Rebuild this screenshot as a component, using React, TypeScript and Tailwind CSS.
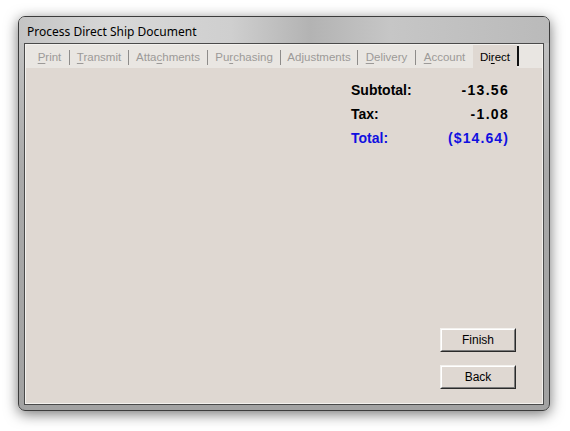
import React from "react";

const tabs: { pre: string; u: string; post: string; w: string; sep: boolean }[] = [
  { pre: "", u: "P", post: "rint", w: "w-[39px]", sep: true },
  { pre: "", u: "T", post: "ransmit", w: "w-[58px]", sep: true },
  { pre: "Atta", u: "c", post: "hments", w: "w-[78px]", sep: true },
  { pre: "Pu", u: "r", post: "chasing", w: "w-[72px]", sep: true },
  { pre: "Ad", u: "j", post: "ustments", w: "w-[76px]", sep: true },
  { pre: "", u: "D", post: "elivery", w: "w-[57px]", sep: true },
  { pre: "", u: "A", post: "ccount", w: "w-[57px]", sep: false },
];

function Btn({ label }: { label: string }) {
  return (
    <div className="w-[76px] h-[24px] border border-t-[#f4f2ef] border-l-[#f4f2ef] border-r-[#2a2a2a] border-b-[#2a2a2a]">
      <div className="w-full h-full border border-t-[#ffffff] border-l-[#ffffff] border-r-[#7a7a7a] border-b-[#7a7a7a] flex items-center justify-center text-[12px] text-black">
        {label}
      </div>
    </div>
  );
}

export default function App() {
  return (
    <div className="w-[570px] h-[431px] bg-white overflow-hidden" style={{ fontFamily: '"Liberation Sans", Arial, sans-serif' }}>
      <div className="ml-[18px] mt-[16px] w-[532px] h-[395px] rounded-[7px] border border-[#3c3c3c] bg-[linear-gradient(180deg,#c9c9c9_0%,#bdbdbd_12%,#a9a9a9_40%,#a2a2a2_100%)] shadow-[0_3px_14px_rgba(0,0,0,0.55)] flex flex-col">
        <div className="h-[26px] shrink-0 rounded-t-[6px] bg-[linear-gradient(90deg,#c4c4c4_0%,#d8d8d8_18%,#cfcfcf_40%,#b3b3b3_55%,#c6c6c6_70%,#bababa_100%)] flex items-center pl-[8px] pt-[4px]">
          <span className="text-[12px] text-black" style={{ fontFamily: '"Noto Sans", "Open Sans", sans-serif' }}>
            Process Direct Ship Document
          </span>
        </div>
        <div className="flex-1 mx-[5px] mb-[5px] border border-[#4a4a4a] bg-[#f3f1ee] p-[1px] flex flex-col">
          <div className="flex-1 bg-[#dfd8d2] flex flex-col">
            <div className="h-[23px] flex items-stretch bg-[#e9e6e2] pl-[4px]">
              {tabs.map((t) => (
                <div key={t.u + t.post} className="flex items-center pt-[2px]">
                  <div className={`${t.w} text-center text-[11.5px] text-[#9c9a98]`}>
                    {t.pre}
                    <span className="underline underline-offset-[2px]">{t.u}</span>
                    {t.post}
                  </div>
                  {t.sep && <div className="w-px h-[15px] bg-[#8e8c8a]" />}
                </div>
              ))}
              <div className="w-[44px] bg-[#dfd8d2] flex items-center justify-center pt-[2px] text-[11.5px] text-black">
                Di<span className="underline underline-offset-[2px]">r</span>ect
              </div>
              <div className="w-[2px] mt-[1px] mb-[2px] bg-[#111]" />
              <div className="flex-1" />
            </div>
            <div className="flex-1 flex flex-col items-end pr-[34px]">
              <div className="mt-[14px] w-[157px] flex flex-col gap-[8px] font-bold text-[14px]">
                <div className="flex justify-between h-[16px] items-center text-black">
                  <span>Subtotal:</span>
                  <span className="tracking-[1.3px] mr-[-1px]">-13.56</span>
                </div>
                <div className="flex justify-between h-[16px] items-center text-black">
                  <span>Tax:</span>
                  <span className="tracking-[1.3px] mr-[-1px]">-1.08</span>
                </div>
                <div className="flex justify-between h-[16px] items-center text-[#1010e0]">
                  <span>Total:</span>
                  <span className="tracking-[1.1px] mr-[-1px]">($14.64)</span>
                </div>
              </div>
              <div className="mt-auto mb-[14px] mr-[-8px] flex flex-col gap-[13px]">
                <Btn label="Finish" />
                <Btn label="Back" />
              </div>
            </div>
          </div>
        </div>
      </div>
    </div>
  );
}
